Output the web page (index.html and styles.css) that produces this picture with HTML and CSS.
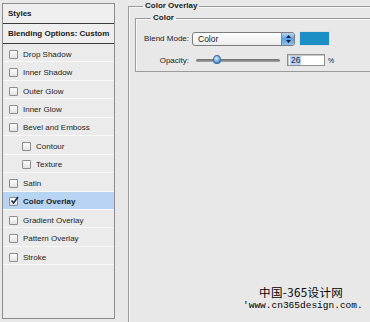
FILE: index.html
```html
<!DOCTYPE html>
<html lang="en">
<head>
  <meta charset="UTF-8">
  <title>Layer Style - Color Overlay</title>
  <link rel="stylesheet" href="styles.css">
</head>
<body>
  <div class="styles-list">
    <div class="list-head">Styles</div>
    <div class="list-head">Blending Options: Custom</div>
    <div class="item"><span class="box"></span>Drop Shadow</div>
    <div class="item"><span class="box"></span>Inner Shadow</div>
    <div class="item"><span class="box"></span>Outer Glow</div>
    <div class="item"><span class="box"></span>Inner Glow</div>
    <div class="item"><span class="box"></span>Bevel and Emboss</div>
    <div class="item sub"><span class="box"></span>Contour</div>
    <div class="item sub"><span class="box"></span>Texture</div>
    <div class="item"><span class="box"></span>Satin</div>
    <div class="item selected">
      <span class="box checked">
        <svg width="9" height="9" viewBox="0 0 9 9"><path d="M1.5 4.5 L3.6 7 L8 1" fill="none" stroke="#1d2b4a" stroke-width="1.6"/></svg>
      </span>Color Overlay
    </div>
    <div class="item"><span class="box"></span>Gradient Overlay</div>
    <div class="item"><span class="box"></span>Pattern Overlay</div>
    <div class="item"><span class="box"></span>Stroke</div>
  </div>

  <fieldset class="group outer">
    <legend>Color Overlay</legend>
    <fieldset class="group inner">
      <legend>Color</legend>
      <div class="form">
        <label>Blend Mode:</label>
        <div class="row">
          <div class="select">
            <span class="select-text">Color</span>
            <span class="stepper">
              <svg width="7" height="10" viewBox="0 0 7 10"><path d="M3.5 1 L6 4 L1 4 Z M3.5 9 L6 6 L1 6 Z" fill="#10233d"/></svg>
            </span>
          </div>
          <div class="swatch"></div>
        </div>
        <label>Opacity:</label>
        <div class="row">
          <div class="slider"><span class="thumb"></span></div>
          <div class="number"><span class="sel">26</span></div>
          <span class="unit">%</span>
        </div>
      </div>
    </fieldset>
  </fieldset>

  <div class="watermark">
    <div class="wm-cn">中国-365设计网</div>
    <div class="wm-url">'www.cn365design.com.</div>
  </div>
</body>
</html>
```

FILE: styles.css
```css
body {
  margin: 0;
  width: 370px;
  height: 322px;
  overflow: hidden;
  display: flex;
  align-items: flex-start;
  background: #e8e8e8;
  font-family: "Liberation Sans", Arial, sans-serif;
  font-size: 8px;
  color: #1a1a1a;
  position: relative;
}

.styles-list {
  margin: 3px 0 0 2px;
  width: 111px;
  height: 314px;
  border: 1px solid #8c8c8c;
  background: #ebebeb;
  flex-shrink: 0;
}

.list-head {
  height: 19px;
  line-height: 20px;
  padding-left: 5px;
  font-weight: bold;
  background: #efefef;
  border-bottom: 1px solid #3a3a3a;
}

.item {
  height: 18.45px;
  box-sizing: border-box;
  display: flex;
  align-items: center;
  padding: 3px 0 0 6px;
  border-bottom: 1px solid #f8f8f8;
  color: #222;
}

.item.sub {
  padding-left: 19px;
}

.item.selected {
  background: #b7d4f3;
  font-weight: bold;
}

.box {
  width: 7px;
  height: 7px;
  margin-right: 5px;
  border: 1px solid #8d8d8d;
  border-radius: 1px;
  background: linear-gradient(#ffffff, #e2e2e2);
  position: relative;
}

.box svg {
  position: absolute;
  left: 0;
  top: -2px;
}

.group {
  margin: 0;
  border: 1px solid #9a9a9a;
  border-right: none;
  box-shadow: inset 1px 1px 0 #f7f7f7;
}

.group legend {
  font-weight: bold;
  padding: 0 2px;
  line-height: 12px;
}

.outer {
  margin-left: 13px;
  padding: 0 0 0 6px;
  width: 235px;
  height: 322px;
  border-bottom: none;
  flex-shrink: 0;
}

.outer > legend {
  margin-left: 8px;
}

.inner {
  padding: 7px 0 5px 8px;
}

.inner > legend {
  margin-left: 7px;
}

.form {
  display: grid;
  grid-template-columns: 45px auto;
  column-gap: 3px;
  row-gap: 8px;
  align-items: center;
}

.form label {
  text-align: right;
  white-space: nowrap;
  color: #222;
}

.row {
  display: flex;
  align-items: center;
}

.select {
  width: 101px;
  height: 12px;
  border: 1px solid #7d7d7d;
  border-radius: 3px;
  background: linear-gradient(#ffffff, #ececec);
  display: flex;
  align-items: center;
  overflow: hidden;
}

.select-text {
  flex: 1;
  padding-left: 5px;
  font-size: 8.5px;
}

.stepper {
  width: 12px;
  height: 12px;
  display: flex;
  align-items: center;
  justify-content: center;
  background: linear-gradient(#b8d6f4, #5d9ee0 50%, #8ec0ee);
  border-left: 1px solid #6a8fb5;
}

.swatch {
  width: 29px;
  height: 13px;
  margin-left: 4px;
  background: #1b8ec6;
  border: 1px solid #e0e0e0;
}

.slider {
  width: 84px;
  height: 3px;
  margin-left: 4px;
  background: linear-gradient(#6b6b6b, #a5a5a5);
  border-radius: 2px;
  position: relative;
}

.thumb {
  position: absolute;
  left: 17px;
  top: -4px;
  width: 8px;
  height: 9px;
  border-radius: 50% 50% 45% 45%;
  background: radial-gradient(circle at 40% 35%, #d9ecff, #4f8fd6 70%);
  border: 1px solid #3e6d9f;
  box-sizing: border-box;
}

.number {
  width: 34px;
  height: 10px;
  margin-left: 7px;
  background: #fff;
  border: 1px solid #8f8f8f;
  box-shadow: inset 1px 1px 0 #c9c9c9;
  display: flex;
  align-items: center;
  padding-left: 2px;
  box-sizing: content-box;
}

.sel {
  background: #b8d6ff;
  line-height: 9px;
  padding: 0 1px;
  font-size: 8.5px;
}

.unit {
  margin-left: 3px;
  font-size: 7px;
}

.watermark {
  position: absolute;
  left: 243px;
  top: 286px;
  color: #000;
}

.wm-cn {
  margin-left: 16px;
  font-family: "Noto Sans CJK SC", sans-serif;
  font-size: 11.5px;
  letter-spacing: 0.4px;
  line-height: 12px;
  height: 12px;
}

.wm-url {
  margin-top: 3px;
  font-family: "Liberation Mono", monospace;
  font-size: 9.5px;
  line-height: 10px;
}
```
